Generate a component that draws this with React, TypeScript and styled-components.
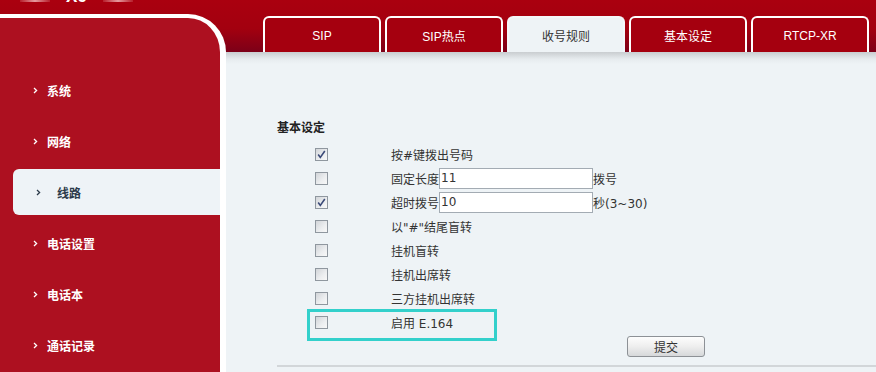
import styled, { createGlobalStyle } from "styled-components";

const GlobalStyle = createGlobalStyle`
  html, body {
    margin: 0;
    padding: 0;
    background: #eef3f6;
  }
  * {
    box-sizing: border-box;
  }
`;

const headerBg = "linear-gradient(180deg, #aa000f 0%, #a3000f 55%, #7c0018 100%)";

const menu = ["系统", "网络", "线路", "电话设置", "电话本", "通话记录"];
const tabs = ["SIP", "SIP热点", "收号规则", "基本设定", "RTCP-XR"];

type Row = {
  checked: boolean;
  label: string;
  value?: string;
  suffix?: string;
  marked?: boolean;
};

const rows: Row[] = [
  { checked: true, label: "按#键拨出号码" },
  { checked: false, label: "固定长度", value: "11", suffix: "拨号" },
  { checked: true, label: "超时拨号", value: "10", suffix: "秒(3~30)" },
  { checked: false, label: "以\"#\"结尾盲转" },
  { checked: false, label: "挂机盲转" },
  { checked: false, label: "挂机出席转" },
  { checked: false, label: "三方挂机出席转" },
  { checked: false, label: "启用 E.164", marked: true },
];

function Chevron() {
  return (
    <svg width="5" height="7" viewBox="0 0 5 7">
      <polyline points="1,1 3.6,3.5 1,6" fill="none" stroke="currentColor" strokeWidth="1.3" />
    </svg>
  );
}

function CheckBox({ checked }: { checked: boolean }) {
  return (
    <Box>
      {checked && (
        <svg width="11" height="11" viewBox="0 0 11 11">
          <path d="M2.2 5.6 L4.3 8.4 L8.8 2" fill="none" stroke="#3b4a78" strokeWidth="1.6" />
        </svg>
      )}
    </Box>
  );
}

export default function App() {
  return (
    <>
      <GlobalStyle />
      <Page>
        <LeftColumn>
          <LogoStrip>
            <LogoGlow />
            <LogoText>X6</LogoText>
            <LogoGlow />
          </LogoStrip>
          <Sidebar>
            <MenuList>
              {menu.map((m) => (
                <MenuItem key={m} $active={m === "线路"}>
                  <Chevron />
                  <span>{m}</span>
                </MenuItem>
              ))}
            </MenuList>
          </Sidebar>
        </LeftColumn>
        <RightColumn>
          <TabBar>
            {tabs.map((t) => (
              <Tab key={t} $active={t === "收号规则"}>
                {t}
              </Tab>
            ))}
          </TabBar>
          <Content>
            <Title>基本设定</Title>
            {rows.map((r) => (
              <FormRow key={r.label}>
                <CheckCell>
                  <CheckBox checked={r.checked} />
                </CheckCell>
                <LabelCell>
                  {r.label}
                  {r.value !== undefined && <TextInput defaultValue={r.value} />}
                  {r.suffix}
                </LabelCell>
                {r.marked && <Highlight />}
              </FormRow>
            ))}
            <ButtonRow>
              <SubmitButton>提交</SubmitButton>
            </ButtonRow>
            <BottomLine />
          </Content>
        </RightColumn>
      </Page>
    </>
  );
}

const Page = styled.div`
  width: 876px;
  height: 372px;
  overflow: hidden;
  display: grid;
  grid-template-columns: 226px 1fr;
  font-family: "DejaVu Sans", "Noto Sans CJK SC", sans-serif;
  font-size: 12px;
`;

const LeftColumn = styled.div`
  display: flex;
  flex-direction: column;
  background: ${headerBg} top / 100% 52px no-repeat;
`;

const LogoStrip = styled.div`
  height: 14px;
  display: flex;
  align-items: flex-start;
  padding-left: 20px;
  gap: 16px;
  overflow: hidden;
`;

const LogoGlow = styled.span`
  width: 30px;
  height: 2px;
  background: linear-gradient(90deg, rgba(255, 200, 200, 0.15), rgba(255, 220, 220, 0.7), rgba(255, 200, 200, 0.15));
`;

const LogoText = styled.span`
  margin-top: -12px;
  font-family: "Liberation Sans", sans-serif;
  font-weight: bold;
  font-size: 17px;
  line-height: 17px;
  color: #fff;
`;

const Sidebar = styled.div`
  flex: 1;
  background: #ad1020;
  border-top: 4px solid #fff;
  border-right: 6px solid #fff;
  border-top-right-radius: 38px;
`;

const MenuList = styled.div`
  padding-top: 49px;
  display: flex;
  flex-direction: column;
  gap: 5px;
`;

const MenuItem = styled.div<{ $active?: boolean }>`
  height: 46px;
  display: flex;
  align-items: center;
  gap: ${({ $active }) => ($active ? 16 : 9)}px;
  margin-left: ${({ $active }) => ($active ? 13 : 0)}px;
  padding-left: ${({ $active }) => ($active ? 23 : 33)}px;
  border-radius: 6px 0 0 6px;
  background: ${({ $active }) => ($active ? "#eef3f7" : "transparent")};
  color: ${({ $active }) => ($active ? "#2b3a4a" : "#fff")};
  font-family: "Noto Sans CJK SC", sans-serif;
  font-weight: bold;
  font-size: 12px;
`;

const RightColumn = styled.div`
  display: flex;
  flex-direction: column;
`;

const TabBar = styled.div`
  height: 52px;
  padding: 16px 0 0 37px;
  display: flex;
  gap: 4px;
  background: ${headerBg};
`;

const Tab = styled.div<{ $active?: boolean }>`
  width: 118px;
  height: 36px;
  flex-shrink: 0;
  display: flex;
  align-items: center;
  justify-content: center;
  padding-top: 1px;
  border: 2px solid ${({ $active }) => ($active ? "#f4f7f9" : "#fff")};
  border-bottom: none;
  border-radius: 6px 6px 0 0;
  background: ${({ $active }) => ($active ? "#eef3f6" : "#a5000f")};
  color: ${({ $active }) => ($active ? "#333" : "#fff")};
  font-family: "Liberation Sans", "Noto Sans CJK SC", sans-serif;
  font-size: 12px;
`;

const Content = styled.div`
  flex: 1;
  padding: 65px 0 0 51px;
  background: linear-gradient(180deg, #c9cdd0 0px, #e6ebee 7px, #eef3f6 12px);
  color: #333;
`;

const Title = styled.div`
  height: 20px;
  line-height: 20px;
  margin-bottom: 5px;
  font-family: "Noto Sans CJK SC", sans-serif;
  font-weight: bold;
  font-size: 12px;
  color: #222;
`;

const FormRow = styled.div`
  position: relative;
  display: grid;
  grid-template-columns: 114px 1fr;
  align-items: center;
  height: 24px;
`;

const CheckCell = styled.div`
  padding-left: 38px;
  display: flex;
  align-items: center;
`;

const Box = styled.span`
  width: 13px;
  height: 13px;
  display: flex;
  align-items: center;
  justify-content: center;
  border: 1px solid #8f979f;
  background: linear-gradient(135deg, #d2d5d9 0%, #eceef0 60%, #f8f8f8 100%);
`;

const LabelCell = styled.div`
  display: flex;
  align-items: center;
  color: #333;
  white-space: nowrap;
`;

const TextInput = styled.input`
  width: 154px;
  height: 21px;
  padding: 0 1px;
  border: 1px solid #a3abb3;
  background: #fff;
  font-family: "DejaVu Sans", sans-serif;
  font-size: 12px;
  color: #333;
  outline: none;
`;

const Highlight = styled.div`
  position: absolute;
  left: 30px;
  top: -1px;
  width: 190px;
  height: 32px;
  border: 3px solid #33d0cb;
  pointer-events: none;
`;

const ButtonRow = styled.div`
  margin-top: 2px;
  padding-left: 350px;
  display: flex;
`;

const SubmitButton = styled.button`
  width: 78px;
  height: 21px;
  padding: 0;
  border: 1px solid #8d9196;
  border-radius: 3px;
  background: linear-gradient(180deg, #fdfdfd 0%, #eeeeee 50%, #d6d8da 100%);
  font-family: "Noto Sans CJK SC", sans-serif;
  font-size: 12px;
  color: #333;
`;

const BottomLine = styled.div`
  margin-top: 8px;
  height: 2px;
  background: #d2d6d9;
`;
